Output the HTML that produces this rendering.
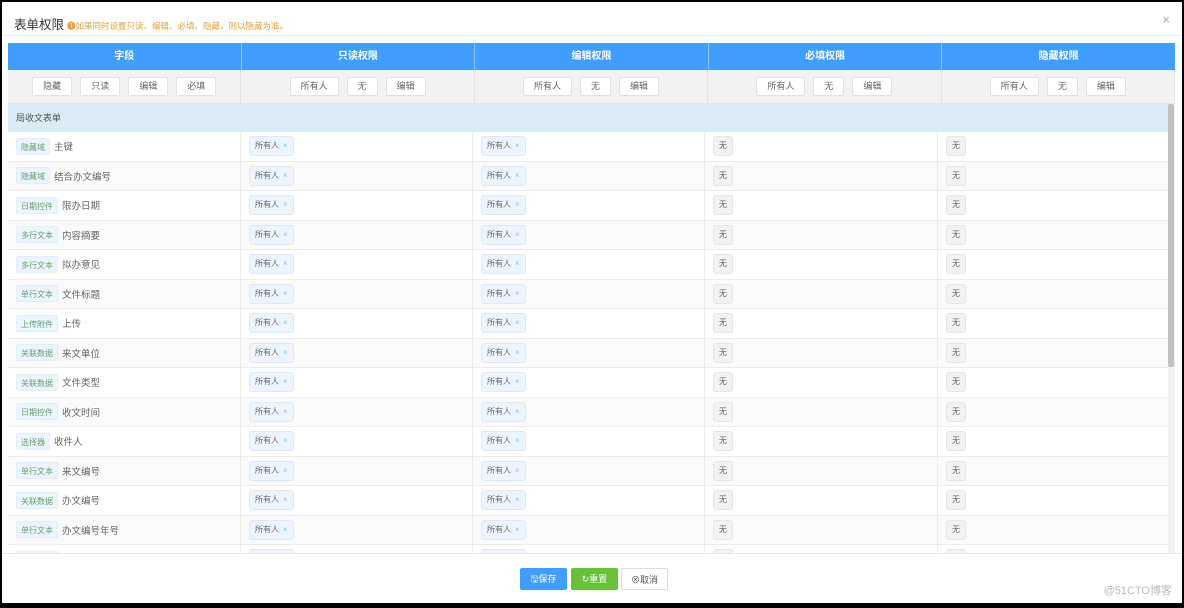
<!DOCTYPE html>
<html><head><meta charset="utf-8"><style>
*{box-sizing:border-box;margin:0;padding:0}
body{width:1184px;height:608px;background:#000;font-family:"Liberation Sans","Noto Sans CJK SC",sans-serif;overflow:hidden;position:relative}
.dlg{position:absolute;left:2px;top:2px;width:1180px;height:601px;background:#fff}
.title{position:absolute;left:12px;top:12px;font-size:12.5px;color:#333}
.tip{font-size:8.5px;color:#e6a23c;margin-left:3px}
.close{position:absolute;right:12px;top:10px;color:#aaa;font-size:13px}
.hr{position:absolute;left:0;top:33px;width:100%;height:1px;background:#eee}
.th{position:absolute;top:41px;left:6px;width:1167px;height:27px;background:#409eff;display:flex}
.th div{flex:1;border-right:1px solid #8cc4ff;color:#fff;font-size:10px;font-weight:bold;text-align:center;line-height:27px}
.th div:last-child{border:none}
.br{position:absolute;top:68px;left:6px;width:1167px;height:34px;background:#f2f2f2;display:flex;border-bottom:1px solid #e5e5e5}
.br>div{flex:1;border-right:1px solid #e5e5e5;display:flex;justify-content:center;align-items:center;gap:8px}
.b{background:#fff;border:1px solid #e2e2e2;border-radius:2px;font-size:9px;color:#666;height:19px;line-height:17px;padding:0 10px}
.grp{position:absolute;top:102px;left:6px;width:1160px;height:28px;background:#d9ecf5;font-size:9px;color:#555;line-height:28px;padding-left:8px}
.body{position:absolute;top:130px;left:6px;width:1160px;height:421px;overflow:hidden}
.row{height:29.5px;display:flex;border-bottom:1px solid #ececec}
.row:nth-child(even){background:#fafafa}
.c{display:flex;align-items:center;padding-left:8px;border-right:1px solid #ececec;font-size:9.5px;color:#666}
.c1{width:233px}.c2{width:232px}.c3{width:232px}.c4{width:233px}.c5{flex:1;border:none}
.t{background:#ecf5ff;color:#6a9f6a;font-size:8px;padding:0 4px;height:17px;line-height:17px;border-radius:2px;margin-right:4px;border:1px solid #e1eefc}
.p{background:#ecf5ff;border:1px solid #dbe9fb;border-radius:3px;font-size:8px;color:#666;height:20px;line-height:18px;padding:0 5px}
.p i{color:#8cc4ff;font-style:normal;margin-left:4px}
.n{background:#f2f2f2;border:1px solid #e6e6e6;border-radius:3px;font-size:8px;color:#666;height:20px;line-height:18px;padding:0 5px}
.sb{position:absolute;left:1166px;top:102px;width:7px;height:449px;background:#f1f1f1}
.sb div{width:6px;height:263px;background:#c1c1c1;border-radius:2px}
.ft{position:absolute;top:551px;left:0;width:100%;height:1px;background:#e8e8e8}
.fb{position:absolute;top:566px;height:22px;font-size:9px;line-height:22px;text-align:center;border-radius:2px;width:47px}
.wm{position:absolute;right:10px;top:580px;color:#bbb;font-size:11px}
</style></head><body><div class="dlg">
<div class="title">表单权限<span class="tip">❶如果同时设置只读、编辑、必填、隐藏，则以隐藏为准。</span></div>
<div class="close">×</div><div class="hr"></div>
<div class="th"><div>字段</div><div>只读权限</div><div>编辑权限</div><div>必填权限</div><div>隐藏权限</div></div>
<div class="br">
<div><span class="b">隐藏</span><span class="b">只读</span><span class="b">编辑</span><span class="b">必填</span></div>
<div><span class="b">所有人</span><span class="b">无</span><span class="b">编辑</span></div>
<div><span class="b">所有人</span><span class="b">无</span><span class="b">编辑</span></div>
<div><span class="b">所有人</span><span class="b">无</span><span class="b">编辑</span></div>
<div><span class="b">所有人</span><span class="b">无</span><span class="b">编辑</span></div>
</div>
<div class="grp">局收文表单</div>
<div class="body">
<div class="row"><div class="c c1"><span class="t">隐藏域</span>主键</div><div class="c c2"><span class="p">所有人<i>×</i></span></div><div class="c c3"><span class="p">所有人<i>×</i></span></div><div class="c c4"><span class="n">无</span></div><div class="c c5"><span class="n">无</span></div></div>
<div class="row"><div class="c c1"><span class="t">隐藏域</span>结合办文编号</div><div class="c c2"><span class="p">所有人<i>×</i></span></div><div class="c c3"><span class="p">所有人<i>×</i></span></div><div class="c c4"><span class="n">无</span></div><div class="c c5"><span class="n">无</span></div></div>
<div class="row"><div class="c c1"><span class="t">日期控件</span>限办日期</div><div class="c c2"><span class="p">所有人<i>×</i></span></div><div class="c c3"><span class="p">所有人<i>×</i></span></div><div class="c c4"><span class="n">无</span></div><div class="c c5"><span class="n">无</span></div></div>
<div class="row"><div class="c c1"><span class="t">多行文本</span>内容摘要</div><div class="c c2"><span class="p">所有人<i>×</i></span></div><div class="c c3"><span class="p">所有人<i>×</i></span></div><div class="c c4"><span class="n">无</span></div><div class="c c5"><span class="n">无</span></div></div>
<div class="row"><div class="c c1"><span class="t">多行文本</span>拟办意见</div><div class="c c2"><span class="p">所有人<i>×</i></span></div><div class="c c3"><span class="p">所有人<i>×</i></span></div><div class="c c4"><span class="n">无</span></div><div class="c c5"><span class="n">无</span></div></div>
<div class="row"><div class="c c1"><span class="t">单行文本</span>文件标题</div><div class="c c2"><span class="p">所有人<i>×</i></span></div><div class="c c3"><span class="p">所有人<i>×</i></span></div><div class="c c4"><span class="n">无</span></div><div class="c c5"><span class="n">无</span></div></div>
<div class="row"><div class="c c1"><span class="t">上传附件</span>上传</div><div class="c c2"><span class="p">所有人<i>×</i></span></div><div class="c c3"><span class="p">所有人<i>×</i></span></div><div class="c c4"><span class="n">无</span></div><div class="c c5"><span class="n">无</span></div></div>
<div class="row"><div class="c c1"><span class="t">关联数据</span>来文单位</div><div class="c c2"><span class="p">所有人<i>×</i></span></div><div class="c c3"><span class="p">所有人<i>×</i></span></div><div class="c c4"><span class="n">无</span></div><div class="c c5"><span class="n">无</span></div></div>
<div class="row"><div class="c c1"><span class="t">关联数据</span>文件类型</div><div class="c c2"><span class="p">所有人<i>×</i></span></div><div class="c c3"><span class="p">所有人<i>×</i></span></div><div class="c c4"><span class="n">无</span></div><div class="c c5"><span class="n">无</span></div></div>
<div class="row"><div class="c c1"><span class="t">日期控件</span>收文时间</div><div class="c c2"><span class="p">所有人<i>×</i></span></div><div class="c c3"><span class="p">所有人<i>×</i></span></div><div class="c c4"><span class="n">无</span></div><div class="c c5"><span class="n">无</span></div></div>
<div class="row"><div class="c c1"><span class="t">选择器</span>收件人</div><div class="c c2"><span class="p">所有人<i>×</i></span></div><div class="c c3"><span class="p">所有人<i>×</i></span></div><div class="c c4"><span class="n">无</span></div><div class="c c5"><span class="n">无</span></div></div>
<div class="row"><div class="c c1"><span class="t">单行文本</span>来文编号</div><div class="c c2"><span class="p">所有人<i>×</i></span></div><div class="c c3"><span class="p">所有人<i>×</i></span></div><div class="c c4"><span class="n">无</span></div><div class="c c5"><span class="n">无</span></div></div>
<div class="row"><div class="c c1"><span class="t">关联数据</span>办文编号</div><div class="c c2"><span class="p">所有人<i>×</i></span></div><div class="c c3"><span class="p">所有人<i>×</i></span></div><div class="c c4"><span class="n">无</span></div><div class="c c5"><span class="n">无</span></div></div>
<div class="row"><div class="c c1"><span class="t">单行文本</span>办文编号年号</div><div class="c c2"><span class="p">所有人<i>×</i></span></div><div class="c c3"><span class="p">所有人<i>×</i></span></div><div class="c c4"><span class="n">无</span></div><div class="c c5"><span class="n">无</span></div></div>
<div class="row"><div class="c c1"><span class="t">单行文本</span>　</div><div class="c c2"><span class="p">所有人<i>×</i></span></div><div class="c c3"><span class="p">所有人<i>×</i></span></div><div class="c c4"><span class="n">无</span></div><div class="c c5"><span class="n">无</span></div></div>
</div>
<div class="sb"><div></div></div>
<div class="ft"></div>
<div class="fb" style="left:518px;background:#409eff;color:#fff">🖫保存</div>
<div class="fb" style="left:569px;background:#67c23a;color:#fff">↻重置</div>
<div class="fb" style="left:619px;background:#fff;color:#555;border:1px solid #ddd">⊗取消</div>
<div class="wm">@51CTO博客</div>
</div></body></html>
